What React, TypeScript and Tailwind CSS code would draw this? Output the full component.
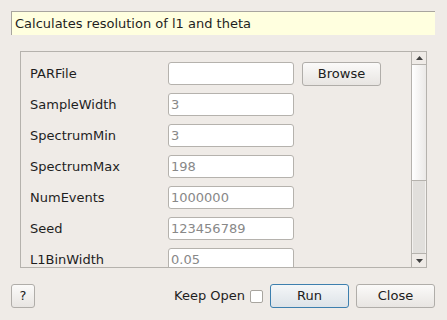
const FONT = "font-['DejaVu_Sans',sans-serif]"

const rows = [
  { label: 'PARFile', value: '', browse: true },
  { label: 'SampleWidth', value: '3' },
  { label: 'SpectrumMin', value: '3' },
  { label: 'SpectrumMax', value: '198' },
  { label: 'NumEvents', value: '1000000' },
  { label: 'Seed', value: '123456789' },
  { label: 'L1BinWidth', value: '0.05' },
]

function QtButton({ children, className, primary }: { children: React.ReactNode; className?: string; primary?: boolean }) {
  return (
    <div
      className={
        'flex items-center justify-center h-[24px] rounded-[3px] border text-[13px] text-[#202020] ' +
        (primary
          ? 'border-[#3d7fae] bg-gradient-to-b from-[#f4f6f8] to-[#dde3e8] '
          : 'border-[#b0ada9] bg-gradient-to-b from-[#fbfaf9] to-[#e8e5e2] ') +
        (className ?? '')
      }
    >
      {children}
    </div>
  )
}

export default function App() {
  return (
    <div className={`w-[447px] h-[320px] bg-[#efebe7] flex flex-col overflow-hidden ${FONT}`}>
      {/* Description */}
      <div className="mt-[11px] ml-[11px] mr-[12px] h-[24px] bg-[#ffffdf] border-l border-t border-[#a8a59f] flex items-center pl-[3px] text-[13px] text-[#1e1e1e]">
        Calculates resolution of l1 and theta
      </div>

      {/* Property scroll area */}
      <div className="mt-[16px] mx-[20px] h-[217px] border border-[#b5b2ad] flex overflow-hidden">
        <div className="flex-1 flex flex-col gap-[8px] pt-[10px] pl-[9px]">
          {rows.map((r) => (
            <div key={r.label} className="flex items-center h-[23px] shrink-0">
              <div className="w-[138px] text-[13px] text-[#1e1e1e]">{r.label}</div>
              <div className="w-[126px] h-[23px] bg-white border border-[#b5b2ad] rounded-[3px] flex items-center pl-[2px] text-[13px] text-[#888888]">
                {r.value}
              </div>
              {r.browse && <QtButton className="ml-[8px] w-[79px] h-[23px]">Browse</QtButton>}
            </div>
          ))}
        </div>

        {/* Scrollbar */}
        <div className="w-[15px] border-l border-[#b5b2ad] flex flex-col">
          <div className="h-[13px] border-b border-[#b5b2ad] flex items-center justify-center">
            <svg width="7" height="4" viewBox="0 0 7 4"><path d="M3.5 0L7 4H0z" fill="#404040" /></svg>
          </div>
          <div className="h-[116px] border-b border-[#b5b2ad] bg-gradient-to-r from-[#ffffff] to-[#ebe9e7]" />
          <div className="flex-1 bg-[#e1dfdc] border-x border-[#f3f1ef]" />
          <div className="h-[14px] border-t border-[#b5b2ad] flex items-center justify-center">
            <svg width="7" height="4" viewBox="0 0 7 4"><path d="M0 0H7L3.5 4z" fill="#404040" /></svg>
          </div>
        </div>
      </div>

      {/* Bottom bar */}
      <div className="mt-[16px] mx-[11px] mr-[12px] flex items-center h-[24px]">
        <QtButton className="w-[24px]">?</QtButton>
        <div className="flex-1" />
        <span className="text-[13px] text-[#1e1e1e]">Keep Open</span>
        <div className="ml-[5px] w-[13px] h-[13px] bg-white border border-[#a8a59f] rounded-[2px]" />
        <QtButton primary className="ml-[7px] w-[79px]">Run</QtButton>
        <QtButton className="ml-[7px] w-[79px]">Close</QtButton>
      </div>
    </div>
  )
}
